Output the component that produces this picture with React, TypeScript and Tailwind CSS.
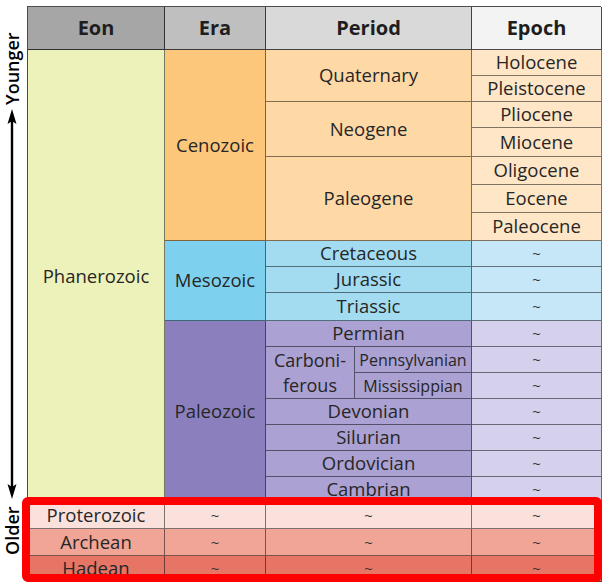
import React from "react";

const base =
  "flex items-center justify-center text-center border-r border-b border-black/50 leading-none";

function Cell({ cls, children }: { cls: string; children?: React.ReactNode }) {
  return <div className={`${base} ${cls}`}>{children}</div>;
}

const T = () => <span className="text-[15px] text-[#333]">~</span>;

export default function App() {
  return (
    <div
      className="relative w-[606px] h-[588px] bg-white flex items-start text-[#262626]"
      style={{ fontFamily: '"Open Sans", "Noto Sans", sans-serif' }}
    >
      {/* left axis */}
      <div className="w-[27px] pt-[33px] flex flex-col items-center pr-[3px]">
        <div className="[writing-mode:vertical-rl] rotate-180 text-[18px] font-semibold leading-[16px] h-[71px] flex items-center justify-center text-black">
          Younger
        </div>
        <svg className="mt-[5px]" width="12" height="390" viewBox="0 0 12 390">
          <line x1="6" y1="10" x2="6" y2="380" stroke="black" strokeWidth="2.4" />
          <polygon points="6,0 1.5,15 6,12 10.5,15" fill="black" />
          <polygon points="6,390 1.5,375 6,378 10.5,375" fill="black" />
        </svg>
        <div className="mt-[8px] [writing-mode:vertical-rl] rotate-180 text-[18px] font-semibold leading-[16px] h-[48px] flex items-center justify-center text-black">
          Older
        </div>
      </div>

      {/* table */}
      <div className="mt-[6px] w-[574px] grid grid-cols-[137px_101px_89px_117px_130px] grid-rows-[43px_26px_26px_26px_29px_28px_28px_28px_26px_26px_28px_26px_26px_26px_26px_26px_26px_26px_26px_27px_26px] border-t border-l border-black/70 text-[18.5px]">
        {/* header */}
        <Cell cls="col-start-1 col-end-2 row-start-1 row-end-2 bg-[#a6a6a6] font-bold text-[20px] text-[#1e1e1e] border-black/70">Eon</Cell>
        <Cell cls="col-start-2 col-end-3 row-start-1 row-end-2 bg-[#bfbfbf] font-bold text-[20px] text-[#1e1e1e] border-black/70">Era</Cell>
        <Cell cls="col-start-3 col-end-5 row-start-1 row-end-2 bg-[#d9d9d9] font-bold text-[20px] text-[#1e1e1e] border-black/70">Period</Cell>
        <Cell cls="col-start-5 col-end-6 row-start-1 row-end-2 bg-[#f3f3f3] font-bold text-[20px] text-[#1e1e1e] border-black/70">Epoch</Cell>

        {/* Phanerozoic */}
        <Cell cls="col-start-1 col-end-2 row-start-2 row-end-19 bg-[#edf2bb]">Phanerozoic</Cell>

        {/* Cenozoic */}
        <Cell cls="col-start-2 col-end-3 row-start-2 row-end-9 bg-[#fdc77b]">Cenozoic</Cell>
        <Cell cls="col-start-3 col-end-5 row-start-2 row-end-4 bg-[#fed9a6]">Quaternary</Cell>
        <Cell cls="col-start-3 col-end-5 row-start-4 row-end-6 bg-[#fed9a6]">Neogene</Cell>
        <Cell cls="col-start-3 col-end-5 row-start-6 row-end-9 bg-[#fed9a6]">Paleogene</Cell>
        <Cell cls="col-start-5 col-end-6 row-start-2 row-end-3 bg-[#fee6c6] border-black/30">Holocene</Cell>
        <Cell cls="col-start-5 col-end-6 row-start-3 row-end-4 bg-[#fee6c6]">Pleistocene</Cell>
        <Cell cls="col-start-5 col-end-6 row-start-4 row-end-5 bg-[#fee6c6] border-black/30">Pliocene</Cell>
        <Cell cls="col-start-5 col-end-6 row-start-5 row-end-6 bg-[#fee6c6]">Miocene</Cell>
        <Cell cls="col-start-5 col-end-6 row-start-6 row-end-7 bg-[#fee6c6] border-black/30">Oligocene</Cell>
        <Cell cls="col-start-5 col-end-6 row-start-7 row-end-8 bg-[#fee6c6] border-black/30">Eocene</Cell>
        <Cell cls="col-start-5 col-end-6 row-start-8 row-end-9 bg-[#fee6c6]">Paleocene</Cell>

        {/* Mesozoic */}
        <Cell cls="col-start-2 col-end-3 row-start-9 row-end-12 bg-[#7ed1ee]">Mesozoic</Cell>
        <Cell cls="col-start-3 col-end-5 row-start-9 row-end-10 bg-[#a3dcf1]">Cretaceous</Cell>
        <Cell cls="col-start-3 col-end-5 row-start-10 row-end-11 bg-[#a3dcf1]">Jurassic</Cell>
        <Cell cls="col-start-3 col-end-5 row-start-11 row-end-12 bg-[#a3dcf1]">Triassic</Cell>
        <Cell cls="col-start-5 col-end-6 row-start-9 row-end-10 bg-[#c6e7f7]"><T /></Cell>
        <Cell cls="col-start-5 col-end-6 row-start-10 row-end-11 bg-[#c6e7f7]"><T /></Cell>
        <Cell cls="col-start-5 col-end-6 row-start-11 row-end-12 bg-[#c6e7f7]"><T /></Cell>

        {/* Paleozoic */}
        <Cell cls="col-start-2 col-end-3 row-start-12 row-end-19 bg-[#8b80bd]">Paleozoic</Cell>
        <Cell cls="col-start-3 col-end-5 row-start-12 row-end-13 bg-[#aba1d2]">Permian</Cell>
        <Cell cls="col-start-3 col-end-4 row-start-13 row-end-15 bg-[#aba1d2]">
          <div className="flex flex-col items-center text-[18px]">
            <span className="block leading-[25px]">Carboni-</span>
            <span className="block leading-[25px]">ferous</span>
          </div>
        </Cell>
        <Cell cls="col-start-4 col-end-5 row-start-13 row-end-14 bg-[#aba1d2] text-[16px]">Pennsylvanian</Cell>
        <Cell cls="col-start-4 col-end-5 row-start-14 row-end-15 bg-[#aba1d2] text-[16px]">Mississippian</Cell>
        <Cell cls="col-start-3 col-end-5 row-start-15 row-end-16 bg-[#aba1d2]">Devonian</Cell>
        <Cell cls="col-start-3 col-end-5 row-start-16 row-end-17 bg-[#aba1d2]">Silurian</Cell>
        <Cell cls="col-start-3 col-end-5 row-start-17 row-end-18 bg-[#aba1d2]">Ordovician</Cell>
        <Cell cls="col-start-3 col-end-5 row-start-18 row-end-19 bg-[#aba1d2]">Cambrian</Cell>
        <Cell cls="col-start-5 col-end-6 row-start-12 row-end-13 bg-[#d5d1ec]"><T /></Cell>
        <Cell cls="col-start-5 col-end-6 row-start-13 row-end-14 bg-[#d5d1ec]"><T /></Cell>
        <Cell cls="col-start-5 col-end-6 row-start-14 row-end-15 bg-[#d5d1ec]"><T /></Cell>
        <Cell cls="col-start-5 col-end-6 row-start-15 row-end-16 bg-[#d5d1ec]"><T /></Cell>
        <Cell cls="col-start-5 col-end-6 row-start-16 row-end-17 bg-[#d5d1ec]"><T /></Cell>
        <Cell cls="col-start-5 col-end-6 row-start-17 row-end-18 bg-[#d5d1ec]"><T /></Cell>
        <Cell cls="col-start-5 col-end-6 row-start-18 row-end-19 bg-[#d5d1ec]"><T /></Cell>

        {/* Precambrian */}
        <Cell cls="col-start-1 col-end-2 row-start-19 row-end-20 bg-[#fbe1dc]">Proterozoic</Cell>
        <Cell cls="col-start-2 col-end-3 row-start-19 row-end-20 bg-[#fbe1dc]"><T /></Cell>
        <Cell cls="col-start-3 col-end-5 row-start-19 row-end-20 bg-[#fbe1dc]"><T /></Cell>
        <Cell cls="col-start-5 col-end-6 row-start-19 row-end-20 bg-[#fbe1dc]"><T /></Cell>

        <Cell cls="col-start-1 col-end-2 row-start-20 row-end-21 bg-[#f0a597]">Archean</Cell>
        <Cell cls="col-start-2 col-end-3 row-start-20 row-end-21 bg-[#f0a597]"><T /></Cell>
        <Cell cls="col-start-3 col-end-5 row-start-20 row-end-21 bg-[#f0a597]"><T /></Cell>
        <Cell cls="col-start-5 col-end-6 row-start-20 row-end-21 bg-[#f0a597]"><T /></Cell>

        <Cell cls="col-start-1 col-end-2 row-start-21 row-end-22 bg-[#e67566]">Hadean</Cell>
        <Cell cls="col-start-2 col-end-3 row-start-21 row-end-22 bg-[#e67566]"><T /></Cell>
        <Cell cls="col-start-3 col-end-5 row-start-21 row-end-22 bg-[#e67566]"><T /></Cell>
        <Cell cls="col-start-5 col-end-6 row-start-21 row-end-22 bg-[#e67566]"><T /></Cell>
      </div>

      {/* red highlight overlay */}
      <div className="absolute left-[22px] top-[497px] w-[580px] h-[85px] border-[8px] border-[#ff0000] rounded-[6px] pointer-events-none" />
    </div>
  );
}
